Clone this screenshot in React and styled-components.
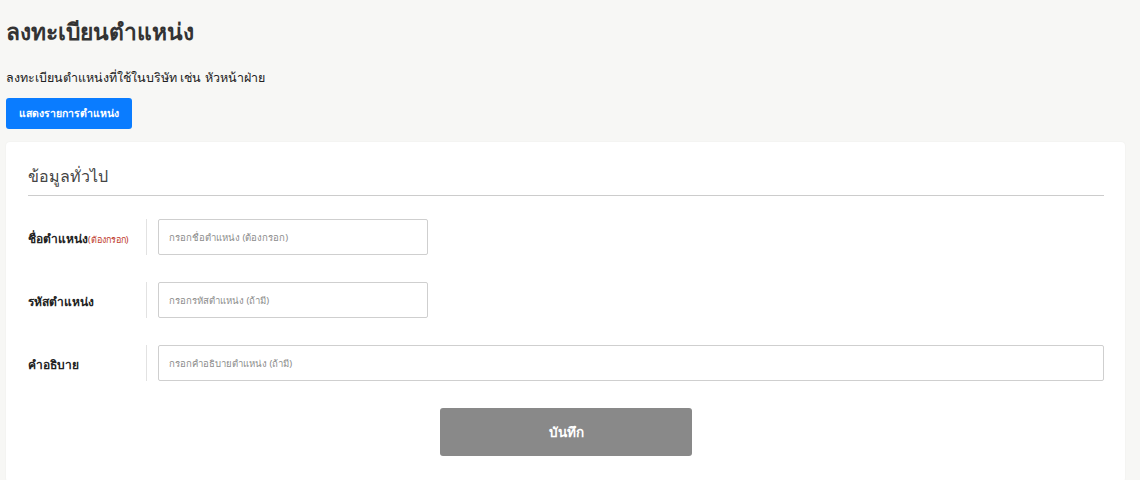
import React from "react";
import styled, { createGlobalStyle } from "styled-components";

const GlobalStyle = createGlobalStyle`
  html, body {
    margin: 0;
    padding: 0;
    background: #f7f7f5;
  }
  body {
    font-family: Tahoma, "Noto Sans", "DejaVu Sans", sans-serif;
    color: #222;
  }
`;

const Page = styled.div`
  padding: 0 6px;
  box-sizing: border-box;
  width: 1131px;
`;

const Title = styled.h1`
  margin: 0;
  padding-top: 18px;
  font-size: 22.8px;
  line-height: 28px;
  font-weight: bold;
  color: #333;
`;

const Subtitle = styled.p`
  margin: 24px 0 0;
  font-size: 12.5px;
  line-height: 16px;
  color: #222;
`;

const ListButton = styled.button`
  display: block;
  margin-top: 12px;
  height: 31px;
  width: 126px;
  background: #0a7cff;
  color: #fff;
  border: 0;
  border-radius: 3px;
  font-family: inherit;
  font-size: 10.5px;
  font-weight: bold;
  cursor: pointer;
`;

const Card = styled.div`
  margin-top: 13px;
  background: #fff;
  border-radius: 4px;
  box-shadow: 0 0 2px rgba(0, 0, 0, 0.06);
  padding: 22px 21px 24px 22px;
  min-height: 340px;
  box-sizing: border-box;
`;

const SectionTitle = styled.h2`
  margin: 0;
  font-size: 16px;
  line-height: 24px;
  font-weight: normal;
  color: #444;
  padding-bottom: 7px;
  border-bottom: 1px solid #cccccc;
`;

const Form = styled.div`
  display: flex;
  flex-direction: column;
  gap: 27px;
  margin-top: 23px;
`;

const Row = styled.div`
  display: flex;
  align-items: center;
`;

const Label = styled.label`
  width: 118px;
  font-size: 12px;
  font-weight: bold;
  color: #222;
  padding-top: 3px;
`;

const Required = styled.span`
  font-size: 9px;
  font-weight: normal;
  color: #c0392b;
`;

const Divider = styled.div`
  width: 1px;
  height: 36px;
  background: #e2e2e2;
  margin-right: 11px;
`;

const Input = styled.input`
  box-sizing: border-box;
  height: 36px;
  width: ${p => (p.$wide ? "946px" : "270px")};
  border: 1px solid #cfcfcf;
  border-radius: 2px;
  padding: 0 10px;
  font-family: inherit;
  font-size: 9.6px;
  color: #333;
  outline: none;
  &::placeholder {
    color: #8c8c8c;
  }
`;

const Actions = styled.div`
  display: flex;
  justify-content: center;
  margin-top: 27px;
`;

const SaveButton = styled.button`
  width: 252px;
  height: 48px;
  background: #898989;
  color: #fff;
  border: 0;
  border-radius: 3px;
  font-family: inherit;
  font-size: 13.5px;
  font-weight: bold;
  cursor: pointer;
`;

export default function App() {
  return (
    <Page>
      <GlobalStyle />
      <Title>ลงทะเบียนตำแหน่ง</Title>
      <Subtitle>ลงทะเบียนตำแหน่งที่ใช้ในบริษัท เช่น หัวหน้าฝ่าย</Subtitle>
      <ListButton>แสดงรายการตำแหน่ง</ListButton>
      <Card>
        <SectionTitle>ข้อมูลทั่วไป</SectionTitle>
        <Form>
          <Row>
            <Label>
              ชื่อตำแหน่ง<Required>(ต้องกรอก)</Required>
            </Label>
            <Divider />
            <Input placeholder="กรอกชื่อตำแหน่ง (ต้องกรอก)" />
          </Row>
          <Row>
            <Label>รหัสตำแหน่ง</Label>
            <Divider />
            <Input placeholder="กรอกรหัสตำแหน่ง (ถ้ามี)" />
          </Row>
          <Row>
            <Label>คำอธิบาย</Label>
            <Divider />
            <Input $wide placeholder="กรอกคำอธิบายตำแหน่ง (ถ้ามี)" />
          </Row>
        </Form>
        <Actions>
          <SaveButton>บันทึก</SaveButton>
        </Actions>
      </Card>
    </Page>
  );
}
